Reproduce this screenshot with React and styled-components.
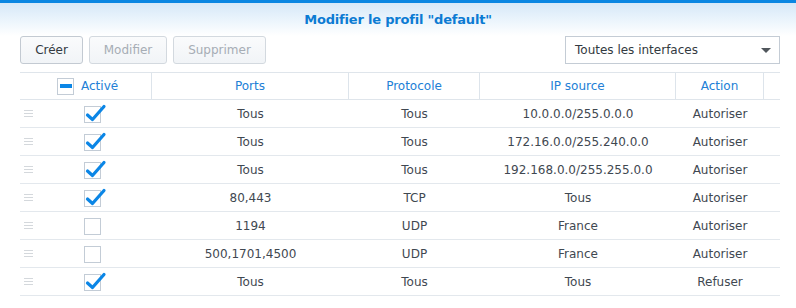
import React from "react";
import styled, { createGlobalStyle } from "styled-components";

const GlobalStyle = createGlobalStyle`
  html, body { margin: 0; padding: 0; background: #ffffff; }
  body { font-family: "DejaVu Sans", Verdana, sans-serif; font-size: 12px; color: #414b55; }
  * { box-sizing: border-box; }
`;

const Window = styled.div`
  width: 796px;
  height: 308px;
  background: #ffffff;
  overflow: hidden;
`;

const TopBar = styled.div`
  height: 3px;
  background: #0a86e2;
`;

const TitleBar = styled.div`
  height: 33px;
  display: flex;
  align-items: center;
  justify-content: center;
  background: linear-gradient(to bottom, #d6e8f8 0%, #eaf4fc 50%, #ffffff 100%);
`;

const Title = styled.h1`
  margin: 0;
  font-size: 13px;
  font-weight: bold;
  color: #0c7bd3;
  letter-spacing: -0.2px;
`;

const Toolbar = styled.div`
  display: flex;
  align-items: center;
  gap: 6px;
  padding: 0 16px 0 20px;
  height: 28px;
`;

const Button = styled.button`
  width: ${(p) => p.$w}px;
  height: 28px;
  padding: 0;
  font-family: inherit;
  font-size: 12px;
  color: ${(p) => (p.disabled ? "#a6adb5" : "#333a41")};
  background: linear-gradient(to bottom, #fafbfc, #f1f4f7);
  border: 1px solid ${(p) => (p.disabled ? "#d3d9df" : "#c3cad2")};
  border-radius: 3px;
`;

const Spacer = styled.div`
  flex: 1;
`;

const Select = styled.div`
  width: 215px;
  height: 28px;
  display: flex;
  align-items: center;
  justify-content: space-between;
  padding: 0 8px 0 9px;
  border: 1px solid #c4ccd5;
  background: #ffffff;
  color: #333a41;
`;

const Caret = styled.span`
  width: 0;
  height: 0;
  border-left: 5px solid transparent;
  border-right: 5px solid transparent;
  border-top: 5px solid #50565c;
`;

const Table = styled.div`
  margin: 8px 16px 0 20px;
  width: 760px;
`;

const cols = "132px 197px 131px 196px 88px 16px";

const HeaderRow = styled.div`
  display: grid;
  grid-template-columns: ${cols};
  height: 28px;
  border-top: 1px solid #dfe5eb;
  border-bottom: 1px solid #dfe5eb;
`;

const HeaderCell = styled.div`
  display: flex;
  align-items: center;
  justify-content: ${(p) => (p.$left ? "flex-start" : "center")};
  padding-left: ${(p) => (p.$left ? "37px" : "0")};
  gap: 7px;
  color: #2280d6;
  border-right: ${(p) => (p.$last ? "none" : "1px solid #dde4eb")};
`;

const Row = styled.div`
  display: grid;
  grid-template-columns: ${cols};
  height: 28px;
  border-bottom: 1px solid #e3e8ed;
`;

const Cell = styled.div`
  display: flex;
  align-items: center;
  justify-content: center;
  color: #3f4851;
`;

const FirstCell = styled.div`
  display: grid;
  grid-template-columns: 20px 1fr;
  align-items: center;
`;

const Handle = styled.div`
  width: 9px;
  height: 7px;
  margin-left: 4px;
  border-top: 1px solid #d4d8dc;
  border-bottom: 1px solid #d4d8dc;
  position: relative;
  &::after {
    content: "";
    position: absolute;
    left: 0;
    right: 0;
    top: 2px;
    height: 1px;
    background: #d4d8dc;
  }
`;

const CheckWrap = styled.div`
  display: flex;
  justify-content: center;
  padding-right: 7px;
  padding-top: 1px;
`;

const Box = styled.span`
  position: relative;
  display: inline-flex;
  align-items: center;
  justify-content: center;
  width: 17px;
  height: 17px;
  border: 1px solid #c3ccd6;
  background: #ffffff;
  flex-shrink: 0;
`;

const Minus = styled.span`
  width: 12px;
  height: 4px;
  background: #0b86e6;
`;

const Tick = styled.svg`
  position: absolute;
  left: 1px;
  top: -2px;
  overflow: visible;
`;

const Check = ({ on }) => (
  <Box>
    {on && (
      <Tick width="19" height="18" viewBox="0 0 19 18">
        <path
          d="M1.5 10 L6.5 14.5 L18 1.5"
          fill="none"
          stroke="#0b86e6"
          strokeWidth="3.2"
          strokeLinecap="round"
          strokeLinejoin="round"
        />
      </Tick>
    )}
  </Box>
);

const rows = [
  { on: true, ports: "Tous", proto: "Tous", ip: "10.0.0.0/255.0.0.0", action: "Autoriser" },
  { on: true, ports: "Tous", proto: "Tous", ip: "172.16.0.0/255.240.0.0", action: "Autoriser" },
  { on: true, ports: "Tous", proto: "Tous", ip: "192.168.0.0/255.255.0.0", action: "Autoriser" },
  { on: true, ports: "80,443", proto: "TCP", ip: "Tous", action: "Autoriser" },
  { on: false, ports: "1194", proto: "UDP", ip: "France", action: "Autoriser" },
  { on: false, ports: "500,1701,4500", proto: "UDP", ip: "France", action: "Autoriser" },
  { on: true, ports: "Tous", proto: "Tous", ip: "Tous", action: "Refuser" },
];

export default function App() {
  return (
    <Window>
      <GlobalStyle />
      <TopBar />
      <TitleBar>
        <Title>Modifier le profil "default"</Title>
      </TitleBar>
      <Toolbar>
        <Button $w={63}>Créer</Button>
        <Button $w={78} disabled>Modifier</Button>
        <Button $w={93} disabled>Supprimer</Button>
        <Spacer />
        <Select>
          <span>Toutes les interfaces</span>
          <Caret />
        </Select>
      </Toolbar>
      <Table>
        <HeaderRow>
          <HeaderCell $left>
            <Box>
              <Minus />
            </Box>
            <span>Activé</span>
          </HeaderCell>
          <HeaderCell>Ports</HeaderCell>
          <HeaderCell>Protocole</HeaderCell>
          <HeaderCell>IP source</HeaderCell>
          <HeaderCell>Action</HeaderCell>
          <HeaderCell $last />
        </HeaderRow>
        {rows.map((r, i) => (
          <Row key={i}>
            <FirstCell>
              <Handle />
              <CheckWrap>
                <Check on={r.on} />
              </CheckWrap>
            </FirstCell>
            <Cell>{r.ports}</Cell>
            <Cell>{r.proto}</Cell>
            <Cell>{r.ip}</Cell>
            <Cell>{r.action}</Cell>
            <Cell />
          </Row>
        ))}
      </Table>
    </Window>
  );
}
